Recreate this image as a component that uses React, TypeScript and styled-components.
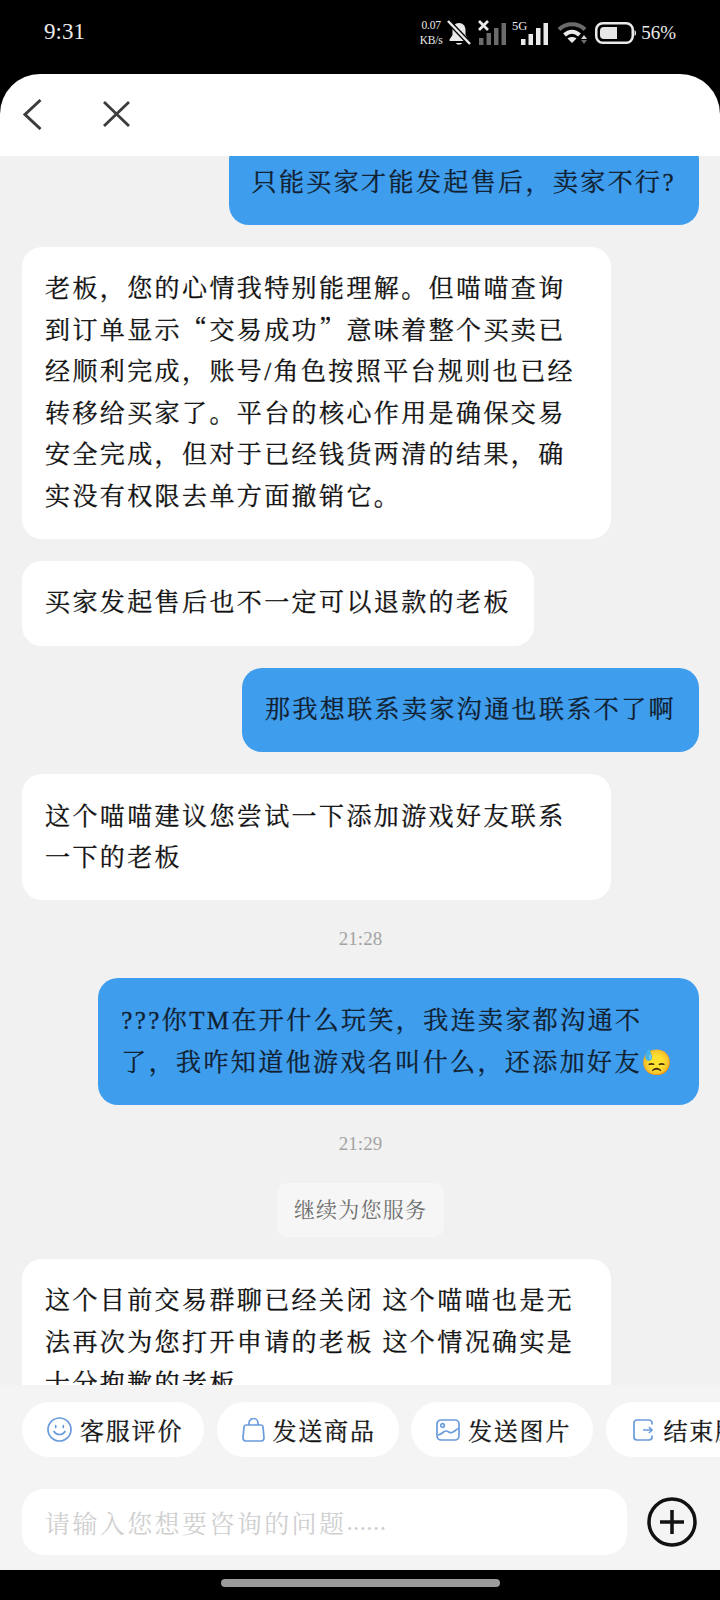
import React from "react";
import styled, { createGlobalStyle } from "styled-components";

const Global = createGlobalStyle`
  html, body { margin: 0; padding: 0; background: #000; }
  * { box-sizing: border-box; }
`;

const Screen = styled.div`
  width: 720px;
  height: 1600px;
  display: flex;
  flex-direction: column;
  background: #000;
  overflow: hidden;
  font-family: "Liberation Serif", "Noto Serif CJK SC", "Noto Sans CJK SC", serif;
`;

const StatusBar = styled.div`
  height: 74px;
  flex: none;
  display: flex;
  align-items: flex-start;
  justify-content: space-between;
  padding: 18px 44px 0 44px;
  color: #eaeaea;
`;

const Clock = styled.div`
  font-size: 23px;
  line-height: 28px;
`;

const StatusIcons = styled.div`
  display: flex;
  align-items: center;
  height: 28px;
  margin-top: 1px;
`;

const NetSpeed = styled.div`
  width: 30px;
  margin-left: -2px;
  font-size: 11.5px;
  line-height: 15px;
  text-align: center;
  letter-spacing: -0.2px;
`;

const Percent = styled.div`
  font-size: 19px;
  line-height: 24px;
  margin-left: 4px;
`;

const Glyph = styled.svg<{ $gap?: number }>`
  display: block;
  flex: none;
  margin-left: ${(p) => p.$gap ?? 0}px;
`;

const Header = styled.div`
  height: 82px;
  flex: none;
  background: #fff;
  border-radius: 40px 40px 0 0;
  display: flex;
  align-items: center;
  padding: 0 0 2px 22px;
  gap: 61px;
  color: #3c3c3c;
`;

const Chat = styled.div`
  flex: none;
  height: 1229px;
  overflow: hidden;
  background: #f1f1f1;
  display: flex;
  flex-direction: column;
  padding: 0 21px 0 22px;
`;

const Bubble = styled.div<{ $mine?: boolean; $offset?: number }>`
  flex: none;
  align-self: ${(p) => (p.$mine ? "flex-end" : "flex-start")};
  max-width: ${(p) => (p.$mine ? 603 : 589)}px;
  margin-top: ${(p) => p.$offset ?? 0}px;
  margin-bottom: 22px;
  padding: 21.6px 23px;
  border-radius: 20px;
  background: ${(p) => (p.$mine ? "#3f9dee" : "#fff")};
  color: ${(p) => (p.$mine ? "#10202f" : "#111")};
  font-size: 25px;
  line-height: 41.5px;
  letter-spacing: 2.4px;
  -webkit-text-stroke: 0.3px currentColor;
`;

const Quote = styled.span`
  font-family: "Noto Serif CJK SC", serif;
  line-height: 1;
`;

const Emoji = styled.span`
  font-family: "Noto Color Emoji", sans-serif;
  font-size: 25px;
  line-height: 1;
  letter-spacing: 0;
  margin-right: 3px;
  -webkit-text-stroke: 0;
`;

const TimeStamp = styled.div`
  flex: none;
  align-self: center;
  color: #a3a3a3;
  font-size: 19px;
  line-height: 24px;
  margin: 5px 0 27px;
`;

const Notice = styled.div`
  flex: none;
  align-self: center;
  padding: 0 17px;
  height: 54px;
  line-height: 54px;
  background: #f6f6f6;
  border-radius: 10px;
  color: #6f6f6f;
  font-size: 21px;
  letter-spacing: 1.2px;
  margin-bottom: 22px;
`;

const Footer = styled.div`
  flex: none;
  height: 185px;
  background: #f4f4f4;
  padding: 17px 0 0 22px;
  overflow: hidden;
`;

const Chips = styled.div`
  display: flex;
  gap: 12.5px;
  width: 800px;
`;

const Chip = styled.div`
  flex: none;
  width: 182px;
  height: 55px;
  background: #fff;
  border-radius: 28px;
  display: flex;
  align-items: center;
  padding-left: 25px;
  gap: 8px;
  color: #161616;
  font-size: 24px;
  letter-spacing: 1.8px;
  -webkit-text-stroke: 0.3px currentColor;
  white-space: nowrap;
  overflow: hidden;
`;

const InputRow = styled.div`
  display: flex;
  align-items: center;
  margin-top: 32px;
`;

const Input = styled.div`
  width: 605px;
  height: 66px;
  background: #fff;
  border-radius: 22px;
  display: flex;
  align-items: center;
  padding-left: 23px;
  color: #cfcfcf;
  font-size: 25px;
  letter-spacing: 2.4px;
`;

const Dots = styled.span`
  letter-spacing: 0.4px;
`;

const Plus = styled.svg`
  display: block;
  margin-left: 20px;
`;

const NavBar = styled.div`
  flex: none;
  height: 30px;
  display: flex;
  justify-content: center;
  padding-top: 9px;
`;

const Handle = styled.div`
  width: 279px;
  height: 8px;
  border-radius: 4px;
  background: #9b9b9b;
`;

const BLUE = "#6a9bdc";

export default function App() {
  return (
    <Screen>
      <Global />
      <StatusBar>
        <Clock>9:31</Clock>
        <StatusIcons>
          <NetSpeed>0.07<br />KB/s</NetSpeed>
          <Glyph $gap={0} width="26" height="28" viewBox="0 0 26 28" fill="none">
            <path d="M13 4c-4 0-6.5 3-6.5 7v5L3.5 20.500v1.500h19v-1.500L19.500 16v-5c0-4-2.500-7-6.500-7z" fill="#eaeaea" />
            <path d="M10 24h6c-.5 2-5.500 2-6 0z" fill="#eaeaea" />
            <path d="M2 2l22 23" stroke="#000" strokeWidth="5" />
            <path d="M2 2l22 23" stroke="#eaeaea" strokeWidth="2.500" />
          </Glyph>
          <Glyph $gap={6} width="30" height="26" viewBox="0 0 30 26">
            <path d="M1 1l9 9M10 1l-9 9" stroke="#eaeaea" strokeWidth="2.800" fill="none" />
            <path d="M1 18h4.500v7H1zM8.500 13h4.500v12H8.500zM16 8h4.500v17H16zM23.500 3h4.500v22h-4.500z" fill="#6b6b6b" />
          </Glyph>
          <Glyph $gap={4} width="37" height="26" viewBox="0 0 37 26">
            <text x="0" y="9.500" fontSize="12.500" fontFamily="Liberation Serif" fill="#eaeaea">5G</text>
            <path d="M9 19h4.500v6H9zM16.500 14h4.500v11h-4.500zM24 8h4.500v17H24zM31.500 3h4.500v22h-4.500z" fill="#eaeaea" />
          </Glyph>
          <Glyph $gap={8} width="31" height="24" viewBox="0 0 31 24" fill="none">
            <path d="M2 8.500C9 1.500 21 1.500 28 8.500" stroke="#6b6b6b" strokeWidth="4" />
            <path d="M7.500 14c4.500-4.500 10.500-4.500 15 0" stroke="#eaeaea" strokeWidth="4" />
            <path d="M15 22l-4.500-4.500c2.500-2 6.500-2 9 0z" fill="#eaeaea" />
            <path d="M27 14l3 4h-6z" fill="#d6d6d6" />
            <path d="M24 19h6l-3 4z" fill="#6b6b6b" />
          </Glyph>
          <Glyph $gap={7} width="42" height="22" viewBox="0 0 42 22" fill="none">
            <rect x="1.250" y="1.250" width="36.500" height="19.500" rx="6.500" stroke="#eaeaea" strokeWidth="2.500" />
            <path d="M5 9a4 4 0 0 1 4-4h13v12H9a4 4 0 0 1-4-4z" fill="#e6e6e6" />
            <path d="M39.500 8c2 .5 2 5.500 0 6z" fill="#eaeaea" />
          </Glyph>
          <Percent>56%</Percent>
        </StatusIcons>
      </StatusBar>

      <Header>
        <svg width="20" height="32" viewBox="0 0 20 32" fill="none">
          <path d="M18.500 2L3 16.500 18.500 31" stroke="currentColor" strokeWidth="3" />
        </svg>
        <svg width="27" height="26" viewBox="0 0 27 26" fill="none">
          <path d="M1 1l25 24M26 1L1 25" stroke="currentColor" strokeWidth="2.800" />
        </svg>
      </Header>

      <Chat>
        <Bubble $mine $offset={-16}>只能买家才能发起售后，卖家不行?</Bubble>
        <Bubble>老板，您的心情我特别能理解。但喵喵查询到订单显示<Quote>“</Quote>交易成功<Quote>”</Quote>意味着整个买卖已经顺利完成，账号/角色按照平台规则也已经转移给买家了。平台的核心作用是确保交易安全完成，但对于已经钱货两清的结果，确实没有权限去单方面撤销它。</Bubble>
        <Bubble>买家发起售后也不一定可以退款的老板</Bubble>
        <Bubble $mine>那我想联系卖家沟通也联系不了啊</Bubble>
        <Bubble>这个喵喵建议您尝试一下添加游戏好友联系一下的老板</Bubble>
        <TimeStamp>21:28</TimeStamp>
        <Bubble $mine>???你TM在开什么玩笑，我连卖家都沟通不<br />了，我咋知道他游戏名叫什么，还添加好友<Emoji>😓</Emoji></Bubble>
        <TimeStamp>21:29</TimeStamp>
        <Notice>继续为您服务</Notice>
        <Bubble>这个目前交易群聊已经关闭 这个喵喵也是无法再次为您打开申请的老板 这个情况确实是十分抱歉的老板</Bubble>
      </Chat>

      <Footer>
        <Chips>
          <Chip>
            <svg width="25" height="25" viewBox="0 0 25 25" fill="none" stroke={BLUE} strokeWidth="1.700" strokeLinecap="round">
              <circle cx="12.500" cy="12.500" r="11.500" />
              <path d="M7 14.500c2.500 4 8.500 4 11 0M8.700 8.500v2M16.300 8.500v2" />
            </svg>
            客服评价
          </Chip>
          <Chip>
            <svg width="23" height="24" viewBox="0 0 23 24" fill="none" stroke={BLUE} strokeWidth="1.700">
              <path d="M4 7h15a2 2 0 0 1 2 1.800l1 11a3 3 0 0 1-3 3.200H4a3 3 0 0 1-3-3.200l1-11A2 2 0 0 1 4 7z" />
              <path d="M7 7V5a4.500 4.500 0 0 1 9 0v2" />
            </svg>
            发送商品
          </Chip>
          <Chip>
            <svg width="24" height="22" viewBox="0 0 24 22" fill="none" stroke={BLUE} strokeWidth="1.700">
              <rect x="1" y="1" width="22" height="20" rx="4" />
              <circle cx="6.500" cy="6.500" r="1.800" />
              <path d="M2 16c4-.5 5-4 8-4s3 2.500 6 1.500 4-3.500 7-4" />
            </svg>
            发送图片
          </Chip>
          <Chip>
            <svg width="25" height="22" viewBox="-2 0 25 22" fill="none" stroke={BLUE} strokeWidth="1.700">
              <path d="M19 5.500V4a3 3 0 0 0-3-3H4a3 3 0 0 0-3 3v14a3 3 0 0 0 3 3h12a3 3 0 0 0 3-3v-1.500" />
              <path d="M10 11h9M16 8l3 3-3 3" />
            </svg>
            结束服务
          </Chip>
        </Chips>
        <InputRow>
          <Input>请输入您想要咨询的问题<Dots>......</Dots></Input>
          <Plus width="50" height="50" viewBox="0 0 50 50" fill="none" stroke="#111">
            <circle cx="25" cy="25" r="23" strokeWidth="3.500" />
            <path d="M25 13v24M13 25h24" strokeWidth="3.500" />
          </Plus>
        </InputRow>
      </Footer>
      <NavBar><Handle /></NavBar>
    </Screen>
  );
}
